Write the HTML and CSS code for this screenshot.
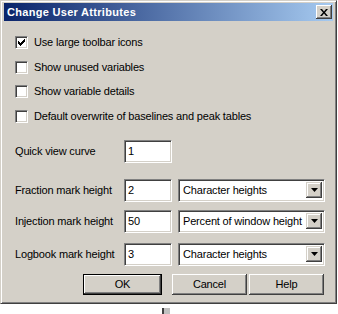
FILE: index.html
```html
<!DOCTYPE html>
<html lang="en">
<head>
  <meta charset="UTF-8">
  <title>Change User Attributes</title>
  <link rel="stylesheet" href="styles.css">
</head>
<body>

<div class="window">
  <!-- Title bar -->
  <div class="titlebar">
    <span class="title">Change User Attributes</span>
    <span class="close">
      <svg width="8" height="7" viewBox="0 0 8 7"><path d="M0 0h2l2 2.5 2-2.5h2L5 3.5 8 7H6L4 4.5 2 7H0l3-3.5z"/></svg>
    </span>
  </div>

  <div class="content">
    <!-- Options -->
    <div class="checks">
      <div class="check">
        <span class="box">
          <svg width="7" height="7" viewBox="0 0 7 7"><path d="M0 2h1v1h1v1h1V3h1V2h1V1h1V0h1v3H6v1H5v1H4v1H3v1H2V6H1V5H0z"/></svg>
        </span>
        Use large toolbar icons
      </div>
      <div class="check"><span class="box"></span>Show unused variables</div>
      <div class="check"><span class="box"></span>Show variable details</div>
      <div class="check"><span class="box"></span>Default overwrite of baselines and peak tables</div>
    </div>

    <!-- Mark heights -->
    <div class="field quick">
      <span class="field-label">Quick view curve</span>
      <span class="input">1</span>
    </div>
    <div class="field fraction">
      <span class="field-label">Fraction mark height</span>
      <span class="input">2</span>
      <span class="combo"><span class="combo-text">Character heights</span><span class="arrow"><svg width="7" height="4" viewBox="0 0 7 4"><path d="M0 0h7L3.5 4z"/></svg></span></span>
    </div>
    <div class="field injection">
      <span class="field-label">Injection mark height</span>
      <span class="input">50</span>
      <span class="combo"><span class="combo-text">Percent of window height</span><span class="arrow"><svg width="7" height="4" viewBox="0 0 7 4"><path d="M0 0h7L3.5 4z"/></svg></span></span>
    </div>
    <div class="field logbook">
      <span class="field-label">Logbook mark height</span>
      <span class="input">3</span>
      <span class="combo"><span class="combo-text">Character heights</span><span class="arrow"><svg width="7" height="4" viewBox="0 0 7 4"><path d="M0 0h7L3.5 4z"/></svg></span></span>
    </div>

    <div class="buttons">
      <span class="btn btn-ok"><span class="btn-face">OK</span></span>
      <span class="btn btn-cancel"><span class="btn-face">Cancel</span></span>
      <span class="btn btn-help"><span class="btn-face">Help</span></span>
    </div>
  </div>
</div>

<div class="below"></div>

</body>
</html>
```

FILE: styles.css
```css
/* Win2000 style dialog */
body {
  margin: 0;
  background-color: #fff;
  font-family: "Liberation Sans", Arial, sans-serif;
  font-size: 11px;
  letter-spacing: -0.17px;
  color: #000;
}
.window {
  box-sizing: border-box;
  width: 337px;
  height: 304px;
  padding: 2px 3px 3px 3px;
  background-color: #d4d0c8;
  border: 1px solid;
  border-color: #d4d0c8 #404040 #404040 #d4d0c8;
  box-shadow: inset 1px 1px #fff, inset -1px -1px #808080;
}
.titlebar {
  height: 18px;
  display: flex;
  align-items: center;
  justify-content: space-between;
  background: linear-gradient(to right, #0a246a, #a6caf0);
}
.title {
  padding-left: 3px;
  color: #fff;
  font-weight: bold;
  font-size: 11px;
  letter-spacing: 0.3px;
}
.close {
  box-sizing: border-box;
  width: 16px;
  height: 14px;
  margin-right: 1px;
  display: flex;
  align-items: center;
  justify-content: center;
  background-color: #d4d0c8;
  box-shadow: inset -1px -1px #404040, inset 1px 1px #fff, inset -2px -2px #808080;
}
.content {
  padding-left: 11px;
}
.checks {
  padding-top: 15px;
  display: flex;
  flex-direction: column;
  gap: 11.5px;
}
.check {
  height: 13px;
  line-height: 13px;
  display: flex;
  align-items: center;
  gap: 6px;
}
.box {
  box-sizing: border-box;
  width: 13px;
  height: 13px;
  display: flex;
  align-items: center;
  justify-content: center;
  background-color: #fff;
  border: 1px solid;
  border-color: #808080 #fff #fff #808080;
  box-shadow: inset 1px 1px #404040, inset -1px -1px #d4d0c8;
}
.field {
  height: 23px;
  display: flex;
  align-items: center;
}
.quick { margin-top: 17px; }
.fraction { margin-top: 16px; }
.injection { margin-top: 8px; }
.logbook { margin-top: 10px; }
.field-label {
  width: 109px;
}
.input, .combo {
  box-sizing: border-box;
  height: 23px;
  display: flex;
  align-items: center;
  background-color: #fff;
  border: 1px solid;
  border-color: #808080 #fff #fff #808080;
  box-shadow: inset 1px 1px #404040, inset -1px -1px #d4d0c8;
}
.input {
  width: 48px;
  padding-left: 3px;
}
.combo {
  width: 147px;
  margin-left: 6px;
  padding: 0 2px 0 4px;
  justify-content: space-between;
}
.combo-text {
  white-space: nowrap;
}
.arrow {
  flex-shrink: 0;
  box-sizing: border-box;
  width: 16px;
  height: 16px;
  display: flex;
  align-items: center;
  justify-content: center;
  background-color: #d4d0c8;
  box-shadow: inset -1px -1px #404040, inset 1px 1px #d4d0c8, inset -2px -2px #808080, inset 2px 2px #fff;
}
.buttons {
  margin-top: 8px;
  padding-left: 68px;
  display: flex;
}
.btn {
  box-sizing: border-box;
  height: 21px;
  display: flex;
  background-color: #d4d0c8;
  box-shadow: inset -1px -1px #404040, inset 1px 1px #fff, inset -2px -2px #808080;
}
.btn-face {
  flex: 1;
  display: flex;
  align-items: center;
  justify-content: center;
}
.btn-ok {
  width: 79px;
  border: 1px solid #000;
}
.btn-cancel {
  width: 75px;
  margin-left: 10px;
}
.btn-help {
  width: 75px;
  margin-left: 2px;
}
.below {
  width: 6px;
  height: 10px;
  margin: 4px 0 0 162px;
  background-color: #c0c0c0;
  border-left: 2px solid #404040;
}
```
